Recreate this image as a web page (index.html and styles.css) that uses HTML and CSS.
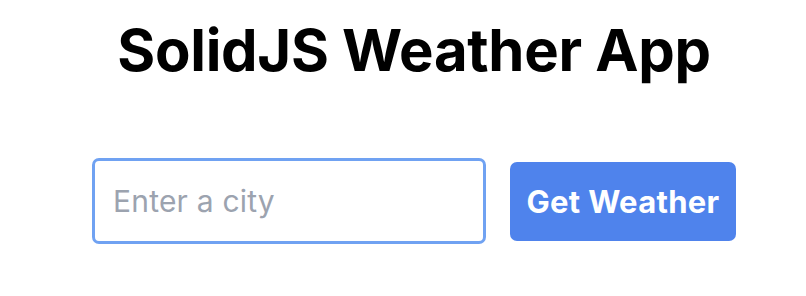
FILE: index.html
```html
<!DOCTYPE html>
<html lang="en">
<head>
<meta charset="utf-8">
<title>SolidJS Weather App</title>
<link rel="stylesheet" href="styles.css">
</head>
<body>
<main class="app">
  <h1 class="title">SolidJS Weather App</h1>
  <form class="search">
    <input class="city-input" type="text" placeholder="Enter a city">
    <button class="get-btn" type="button">Get Weather</button>
  </form>
</main>
</body>
</html>
```

FILE: styles.css
```css
html, body {
  margin: 0;
  padding: 0;
  background: #ffffff;
}
body {
  font-family: Inter, "Noto Sans", sans-serif;
  color: #000;
}
.app {
  display: flex;
  flex-direction: column;
  align-items: center;
  padding-left: 22px;
  padding-top: 15px;
}
.title {
  margin: 0;
  font-size: 58px;
  font-weight: 700;
  line-height: 70px;
  letter-spacing: -0.3px;
}
.search {
  display: flex;
  align-items: center;
  gap: 24px;
  margin-top: 73px;
}
.city-input {
  box-sizing: border-box;
  width: 394px;
  height: 86px;
  border: 3px solid #70a2f2;
  border-radius: 7px;
  padding: 0 18px;
  font-family: Inter, "Noto Sans", sans-serif;
  font-size: 30px;
  letter-spacing: 0.2px;
  color: #111;
  outline: none;
  background: #fff;
}
.city-input::placeholder {
  color: #9ca3af;
}
.get-btn {
  box-sizing: border-box;
  width: 226px;
  height: 79px;
  border: none;
  border-radius: 7px;
  background: #4f83ec;
  color: #fff;
  font-family: Inter, "Noto Sans", sans-serif;
  font-size: 31px;
  font-weight: 700;
  letter-spacing: 0.3px;
  padding: 0;
  cursor: pointer;
}
```
